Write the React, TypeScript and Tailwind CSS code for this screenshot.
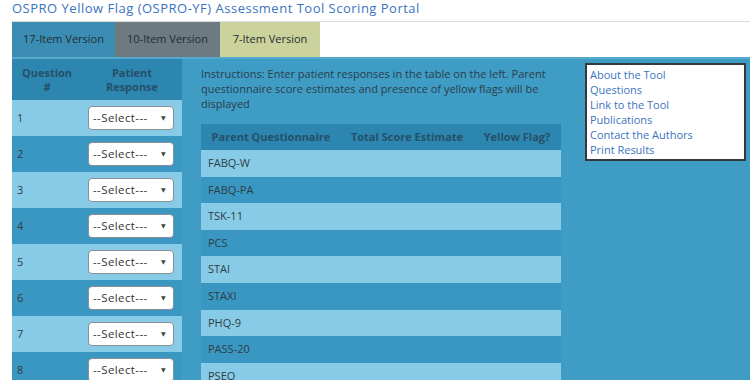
import React from "react";

const leftRows = [1, 2, 3, 4, 5, 6, 7, 8];
const parents = ["FABQ-W", "FABQ-PA", "TSK-11", "PCS", "STAI", "STAXI", "PHQ-9", "PASS-20", "PSEQ"];
const links = ["About the Tool", "Questions", "Link to the Tool", "Publications", "Contact the Authors", "Print Results"];

function Select() {
  return (
    <div className="w-[86px] h-[24px] bg-white border border-[#8a8f93] rounded-[4px] flex items-center justify-between pl-[4px] pr-[7px] text-[11.5px] tracking-[0.4px] text-[#333]">
      <span>--Select---</span>
      <span className="text-[6px] text-[#444]">▼</span>
    </div>
  );
}

export default function App() {
  return (
    <div
      className="w-[750px] h-[380px] overflow-hidden bg-white text-[#2d3d48]"
      style={{ fontFamily: '"Open Sans", "DejaVu Sans", sans-serif' }}
    >
      <div className="pl-3 h-[21px] text-[13px] leading-[16px] text-[#3b73c0] tracking-[0.5px]">
        OSPRO Yellow Flag (OSPRO-YF) Assessment Tool Scoring Portal
      </div>
      <div className="ml-3 border-t border-[#dcdcdc] flex h-[36px] text-[11px] text-[#1f2d36]">
        <div className="w-[103px] bg-[#3b8db4] flex items-center justify-center">17-Item Version</div>
        <div className="w-[105px] bg-[#6d7a80] flex items-center justify-center">10-Item Version</div>
        <div className="w-[100px] bg-[#ccd29b] flex items-center justify-center">7-Item Version</div>
      </div>
      <div className="ml-3 h-[2px] bg-[#55a9cd]" />
      <div className="ml-3 flex bg-[#3f9cc5] h-[330px]">
        {/* left table */}
        <div className="w-[170px] flex flex-col">
          <div className="h-[41px] bg-[#2d86af] flex text-[11px] font-bold text-[#24506a] leading-[14px]">
            <div className="w-[70px] flex items-center justify-center text-center">Question<br />#</div>
            <div className="w-[100px] flex items-center justify-center text-center">Patient<br />Response</div>
          </div>
          {leftRows.map((n) => (
            <div
              key={n}
              className={`h-[36px] flex items-center text-[11px] ${n % 2 === 1 ? "bg-[#88cbe6]" : "bg-[#3a97c1]"}`}
            >
              <div className="w-[76px] pl-[5px]">{n}</div>
              <Select />
            </div>
          ))}
        </div>
        {/* middle */}
        <div className="pl-[19px] w-[379px]">
          <div className="pt-[7px] text-[11px] leading-[15px] text-[#2a3e4a] w-[355px]">
            Instructions: Enter patient responses in the table on the left. Parent questionnaire score estimates and presence of yellow flags will be displayed
          </div>
          <div className="mt-[13px] w-[360px]">
            <div className="h-[26px] bg-[#2d86af] flex items-center text-[11px] font-bold text-[#24506a]">
              <div className="w-[140px] text-center">Parent Questionnaire</div>
              <div className="w-[132px] text-center">Total Score Estimate</div>
              <div className="w-[88px] text-center">Yellow Flag?</div>
            </div>
            {parents.map((p, i) => (
              <div
                key={p}
                className={`h-[26.6px] flex items-center pl-[7px] text-[11px] ${i % 2 === 0 ? "bg-[#88cbe6]" : "bg-[#3a97c1]"}`}
              >
                {p}
              </div>
            ))}
          </div>
        </div>
        {/* nav */}
        <div className="pl-[24px] pt-[4px]">
          <div className="w-[161px] bg-white border-2 border-[#333a3e] px-[3px] py-[2px] text-[11px] leading-[15px] text-[#3b73c0]">
            {links.map((l) => (
              <div key={l}>{l}</div>
            ))}
          </div>
        </div>
      </div>
    </div>
  );
}
